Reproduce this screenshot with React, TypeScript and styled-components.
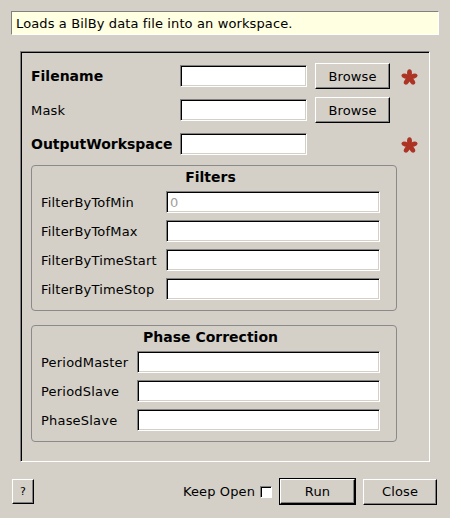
import React from 'react'
import styled, { createGlobalStyle, css } from 'styled-components'

const Colors = {
  Face: '#d4d0c8',
  Shadow: '#808080',
  Dark: '#000000',
  Light: '#ffffff',
  Tip: '#ffffe1',
  Required: '#ad3325',
}

const GlobalStyle = createGlobalStyle`
  html, body {
    margin: 0;
    padding: 0;
    background: ${Colors.Face};
  }
  body {
    font-family: 'DejaVu Sans', 'Liberation Sans', sans-serif;
    font-size: 13px;
    letter-spacing: 0.12px;
    color: #000;
  }
`

const raised = css`
  border: 1px solid;
  border-color: ${Colors.Light} ${Colors.Dark} ${Colors.Dark} ${Colors.Light};
  box-shadow: inset -1px -1px 0 ${Colors.Shadow};
  background: ${Colors.Face};
`

const sunken = css`
  border: 1px solid;
  border-color: ${Colors.Shadow} ${Colors.Light} ${Colors.Light} ${Colors.Shadow};
  box-shadow: inset 1px 1px 0 ${Colors.Dark}, inset -1px -1px 0 ${Colors.Face};
`

const Window = styled.div`
  display: flex;
  flex-direction: column;
  width: 450px;
  height: 518px;
  box-sizing: border-box;
  padding: 11px 11px 0 11px;
`

const Description = styled.div`
  display: flex;
  align-items: center;
  width: 428px;
  height: 24px;
  box-sizing: border-box;
  padding: 0 4px;
  background: ${Colors.Tip};
  border: 1px solid;
  border-color: ${Colors.Shadow} ${Colors.Light} ${Colors.Light} ${Colors.Shadow};
`

const Frame = styled.div`
  display: flex;
  flex-direction: column;
  margin: 16px 0 0 9px;
  width: 410px;
  height: 411px;
  box-sizing: border-box;
  padding: 11px 0 0 10px;
  ${sunken};
`

const MainGrid = styled.div`
  display: grid;
  grid-template-columns: 141px 127px 75px 20px;
  grid-auto-rows: 26px;
  column-gap: 8px;
  row-gap: 8px;
  align-items: center;
`

const Label = styled.span<{ $bold?: boolean }>`
  font-weight: ${p => (p.$bold ? 700 : 400)};
  font-size: ${p => (p.$bold ? '14px' : '13px')};
  letter-spacing: ${p => (p.$bold ? '0' : '0.2px')};
  white-space: nowrap;
`

const Field = styled.div<{ $muted?: boolean }>`
  display: flex;
  align-items: center;
  height: 22px;
  box-sizing: border-box;
  padding: 0 3px;
  background: ${Colors.Light};
  color: ${p => (p.$muted ? '#a0a0a0' : '#000')};
  ${sunken};
`

const Button = styled.button<{ $default?: boolean }>`
  ${raised};
  font: inherit;
  letter-spacing: inherit;
  color: #000;
  height: 26px;
  padding: 0;
  ${p =>
    p.$default &&
    css`
      outline: 1px solid ${Colors.Dark};
      outline-offset: 0;
      height: 25px;
      margin: 0 1px;
    `}
`

const BrowseButton = styled(Button)`
  width: 75px;
`

const Asterisk = styled.svg`
  justify-self: end;
  margin-top: 3px;
`

const Group = styled.fieldset<{ $labelWidth: number }>`
  display: flex;
  flex-direction: column;
  margin: 0;
  padding: 3px 16px 10px 9px;
  width: 366px;
  box-sizing: border-box;
  border: 1px solid #8a8a8a;
  border-radius: 4px;
  --label-width: ${p => p.$labelWidth}px;
`

const GroupTitle = styled.div`
  text-align: center;
  font-weight: 700;
  font-size: 14px;
  letter-spacing: 0;
  line-height: 16px;
  margin-bottom: 6px;
`

const FormGrid = styled.div`
  display: grid;
  grid-template-columns: var(--label-width) 1fr;
  row-gap: 7px;
  align-items: center;
`

const Spacer = styled.div<{ $h: number }>`
  height: ${p => p.$h}px;
  flex: none;
`

const BottomBar = styled.div`
  display: flex;
  align-items: center;
  height: 27px;
  margin: 16px 2px 0 1px;
`

const HelpButton = styled(Button)`
  width: 22px;
  height: 25px;
  font-size: 11px;
`

const KeepOpen = styled.label`
  display: flex;
  align-items: center;
  gap: 5px;
  margin-left: auto;
  margin-right: 7px;
`

const CheckBox = styled.span`
  width: 12px;
  height: 12px;
  box-sizing: border-box;
  background: ${Colors.Light};
  border: 1px solid;
  border-color: ${Colors.Shadow} ${Colors.Light} ${Colors.Light} ${Colors.Shadow};
  box-shadow: inset 1px 1px 0 ${Colors.Dark};
`

const RunButton = styled(Button)`
  width: 75px;
`

const CloseButton = styled(Button)`
  width: 74px;
  margin-left: 7px;
`

const RequiredMark = () => (
  <Asterisk width="17" height="17" viewBox="-10 -10 20 20">
    {[0, 72, 144, 216, 288].map(a => (
      <ellipse key={a} cx="0" cy="-5.2" rx="2.9" ry="4.6" fill={Colors.Required} transform={`rotate(${a})`} />
    ))}
    <circle r="3.2" fill={Colors.Required} />
  </Asterisk>
)

const filters = [
  { name: 'FilterByTofMin', value: '0' },
  { name: 'FilterByTofMax' },
  { name: 'FilterByTimeStart' },
  { name: 'FilterByTimeStop' },
]

const phase = ['PeriodMaster', 'PeriodSlave', 'PhaseSlave']

export default function App() {
  return (
    <>
      <GlobalStyle />
      <Window>
        <Description>Loads a BilBy data file into an workspace.</Description>
        <Frame>
          <MainGrid>
            <Label $bold>Filename</Label>
            <Field />
            <BrowseButton>Browse</BrowseButton>
            <RequiredMark />

            <Label>Mask</Label>
            <Field />
            <BrowseButton>Browse</BrowseButton>
            <span />

            <Label $bold>OutputWorkspace</Label>
            <Field />
            <span />
            <RequiredMark />
          </MainGrid>

          <Spacer $h={8} />

          <Group $labelWidth={125}>
            <GroupTitle>Filters</GroupTitle>
            <FormGrid>
              {filters.map(f => (
                <React.Fragment key={f.name}>
                  <Label>{f.name}</Label>
                  <Field $muted={!!f.value}>{f.value}</Field>
                </React.Fragment>
              ))}
            </FormGrid>
          </Group>

          <Spacer $h={14} />

          <Group $labelWidth={96}>
            <GroupTitle>Phase Correction</GroupTitle>
            <FormGrid>
              {phase.map(name => (
                <React.Fragment key={name}>
                  <Label>{name}</Label>
                  <Field />
                </React.Fragment>
              ))}
            </FormGrid>
          </Group>
        </Frame>

        <BottomBar>
          <HelpButton>?</HelpButton>
          <KeepOpen>
            Keep Open
            <CheckBox />
          </KeepOpen>
          <RunButton $default>Run</RunButton>
          <CloseButton>Close</CloseButton>
        </BottomBar>
      </Window>
    </>
  )
}
